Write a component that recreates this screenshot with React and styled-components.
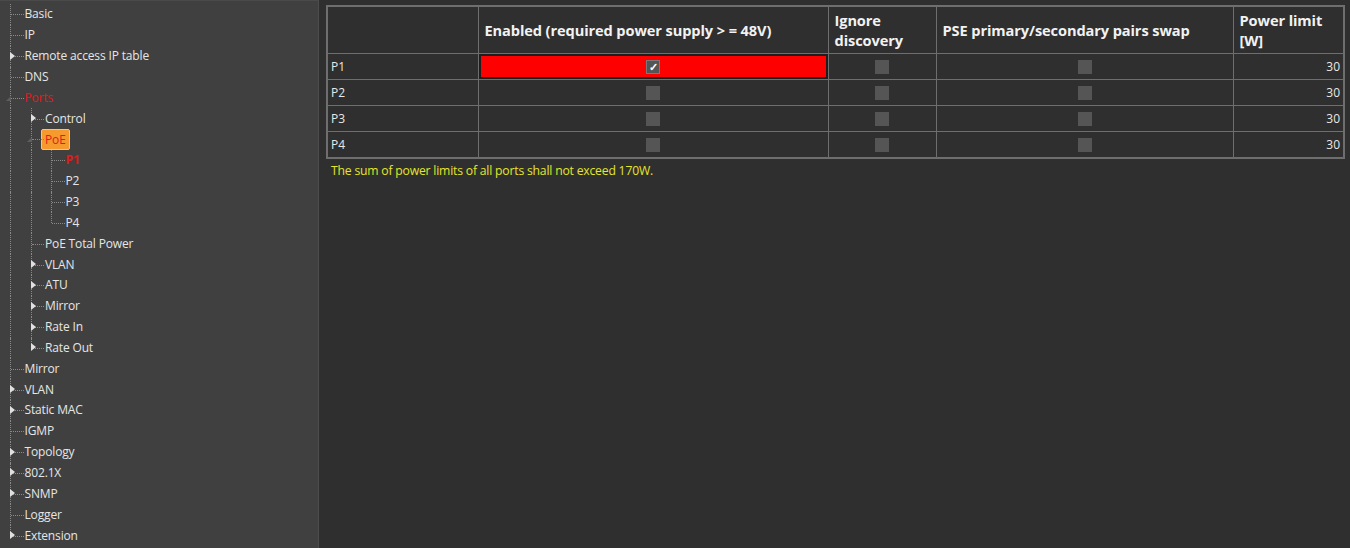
import React from "react";
import styled, { createGlobalStyle, css } from "styled-components";

const GlobalStyle = createGlobalStyle`
  html, body {
    margin: 0;
    padding: 0;
    background: #2f2f2f;
  }
  body {
    font-family: "Open Sans", "Noto Sans", sans-serif;
  }
`;

// tree data
const tree = [
  { label: "Basic" },
  { label: "IP" },
  { label: "Remote access IP table", collapsed: true },
  { label: "DNS" },
  {
    label: "Ports",
    state: "active",
    children: [
      { label: "Control", collapsed: true },
      {
        label: "PoE",
        state: "selected",
        children: [
          { label: "P1", state: "current" },
          { label: "P2" },
          { label: "P3" },
          { label: "P4" },
        ],
      },
      { label: "PoE Total Power" },
      { label: "VLAN", collapsed: true },
      { label: "ATU", collapsed: true },
      { label: "Mirror", collapsed: true },
      { label: "Rate In", collapsed: true },
      { label: "Rate Out", collapsed: true },
    ],
  },
  { label: "Mirror" },
  { label: "VLAN", collapsed: true },
  { label: "Static MAC", collapsed: true },
  { label: "IGMP" },
  { label: "Topology", collapsed: true },
  { label: "802.1X", collapsed: true },
  { label: "SNMP", collapsed: true },
  { label: "Logger" },
  { label: "Extension", collapsed: true },
];

function flatten(nodes, trail = [], out = []) {
  nodes.forEach((n, i) => {
    const last = i === nodes.length - 1;
    out.push({ ...n, trail, last });
    if (n.children) flatten(n.children, [...trail, !last], out);
  });
  return out;
}

const ports = [
  { name: "P1", enabled: true, highlight: true },
  { name: "P2" },
  { name: "P3" },
  { name: "P4" },
];

function App() {
  const rows = flatten(tree);
  return (
    <>
      <GlobalStyle />
      <Window>
        <Sidebar>
          {rows.map((r, idx) => (
            <TreeRow key={idx}>
              {r.trail.map((cont, j) => (
                <Guide key={j} $line={cont ? "full" : "none"} />
              ))}
              <Guide $line={r.last ? "half" : "full"} $branch>
                {r.collapsed && <Arrow />}
                {r.children && <OpenArrow />}
              </Guide>
              <Label $state={r.state}>{r.label}</Label>
            </TreeRow>
          ))}
        </Sidebar>
        <Main>
          <Table>
            <colgroup>
              <Col $w={151} />
              <Col $w={350} />
              <Col $w={108} />
              <Col $w={297} />
              <Col $w={111} />
            </colgroup>
            <thead>
              <tr>
                <Th></Th>
                <Th>Enabled (required power supply &gt; = 48V)</Th>
                <Th>Ignore discovery</Th>
                <Th>PSE primary/secondary pairs swap</Th>
                <Th>Power limit [W]</Th>
              </tr>
            </thead>
            <tbody>
              {ports.map((p) => (
                <tr key={p.name}>
                  <Td>{p.name}</Td>
                  <Td $center $highlight={p.highlight}>
                    <Check $checked={p.enabled}>{p.enabled && "✓"}</Check>
                  </Td>
                  <Td $center>
                    <Check />
                  </Td>
                  <Td $center>
                    <Check />
                  </Td>
                  <Td $right>30</Td>
                </tr>
              ))}
            </tbody>
          </Table>
          <Note>The sum of power limits of all ports shall not exceed 170W.</Note>
        </Main>
      </Window>
    </>
  );
}

const Window = styled.div`
  display: flex;
  height: 548px;
  width: 1350px;
  overflow: hidden;
  background: #2f2f2f;
`;

const Sidebar = styled.div`
  width: 319px;
  flex-shrink: 0;
  background: #404040;
  border-right: 1px solid #4d4d4d;
  border-top: 1px solid #4a4a4a;
  padding-top: 3px;
  box-sizing: border-box;
`;

const TreeRow = styled.div`
  display: flex;
  align-items: center;
  height: 20.85px;
`;

const Guide = styled.div`
  position: relative;
  width: 20.5px;
  height: 100%;
  flex-shrink: 0;
  &::before {
    content: "";
    position: absolute;
    left: 10px;
    top: 0;
    border-left: 1px dotted #8a8a8a;
    height: ${(p) => (p.$line === "full" ? "100%" : p.$line === "half" ? "50%" : "0")};
  }
  ${(p) =>
    p.$branch &&
    css`
      &::after {
        content: "";
        position: absolute;
        left: 11px;
        right: -3px;
        top: 50%;
        border-top: 1px dotted #8a8a8a;
      }
    `}
`;

const Arrow = styled.span`
  position: absolute;
  left: 10px;
  top: 50%;
  margin-top: -4.5px;
  width: 0;
  height: 0;
  border-top: 4.5px solid transparent;
  border-bottom: 4.5px solid transparent;
  border-left: 5px solid #e0e0e0;
  z-index: 1;
`;

const OpenArrow = styled.span`
  position: absolute;
  left: 6px;
  top: 50%;
  margin-top: -2px;
  width: 0;
  height: 0;
  border-left: 5px solid transparent;
  border-bottom: 5px solid #5e5e5e;
  z-index: 1;
`;

const Label = styled.span`
  margin-left: 4px;
  font-size: 12px;
  line-height: 16px;
  white-space: nowrap;
  color: #e6e6e6;
  letter-spacing: -0.15px;
  ${(p) =>
    p.$state === "active" &&
    css`
      color: #e01a1a;
    `}
  ${(p) =>
    p.$state === "current" &&
    css`
      color: #e01a1a;
      font-weight: 700;
    `}
  ${(p) =>
    p.$state === "selected" &&
    css`
      color: #e01a1a;
      background: #f79a2e;
      border: 1px solid #f3c48a;
      border-radius: 2px;
      padding: 2px 3px;
      margin-left: 0;
      line-height: 15px;
    `}
`;

const Main = styled.div`
  flex: 1;
  padding: 5px 6px 0 7px;
`;

const Table = styled.table`
  border-collapse: collapse;
  width: 1017px;
  border: 2px solid #6e6e6e;
  color: #e8e8e8;
  font-size: 12px;
  table-layout: fixed;
`;

const Col = styled.col`
  width: ${(p) => p.$w}px;
`;

const Th = styled.th`
  height: 46px;
  border: 1px solid #6e6e6e;
  text-align: left;
  vertical-align: middle;
  padding: 0 6px;
  font-size: 14.6px;
  font-weight: 700;
  line-height: 20px;
  color: #f2f2f2;
  letter-spacing: -0.1px;
`;

const Td = styled.td`
  height: 25px;
  padding: 0 3px;
  border: 1px solid #6e6e6e;
  text-align: ${(p) => (p.$center ? "center" : p.$right ? "right" : "left")};
  vertical-align: middle;
  line-height: 14px;
  ${(p) =>
    p.$highlight &&
    css`
      background: #ff0000;
      box-shadow: inset 0 0 0 2px #1e1e1e;
    `}
`;

const Check = styled.span`
  display: inline-flex;
  align-items: center;
  justify-content: center;
  width: 14px;
  height: 14px;
  box-sizing: border-box;
  vertical-align: middle;
  background: #555555;
  border: 1px solid ${(p) => (p.$checked ? "#7a7a7a" : "#555555")};
  color: #ffffff;
  font-size: 11px;
  font-weight: 700;
  line-height: 1;
`;

const Note = styled.div`
  margin-top: 3px;
  padding-left: 5px;
  color: #e5e52a;
  font-size: 12.2px;
  letter-spacing: -0.2px;
`;

export default App;
